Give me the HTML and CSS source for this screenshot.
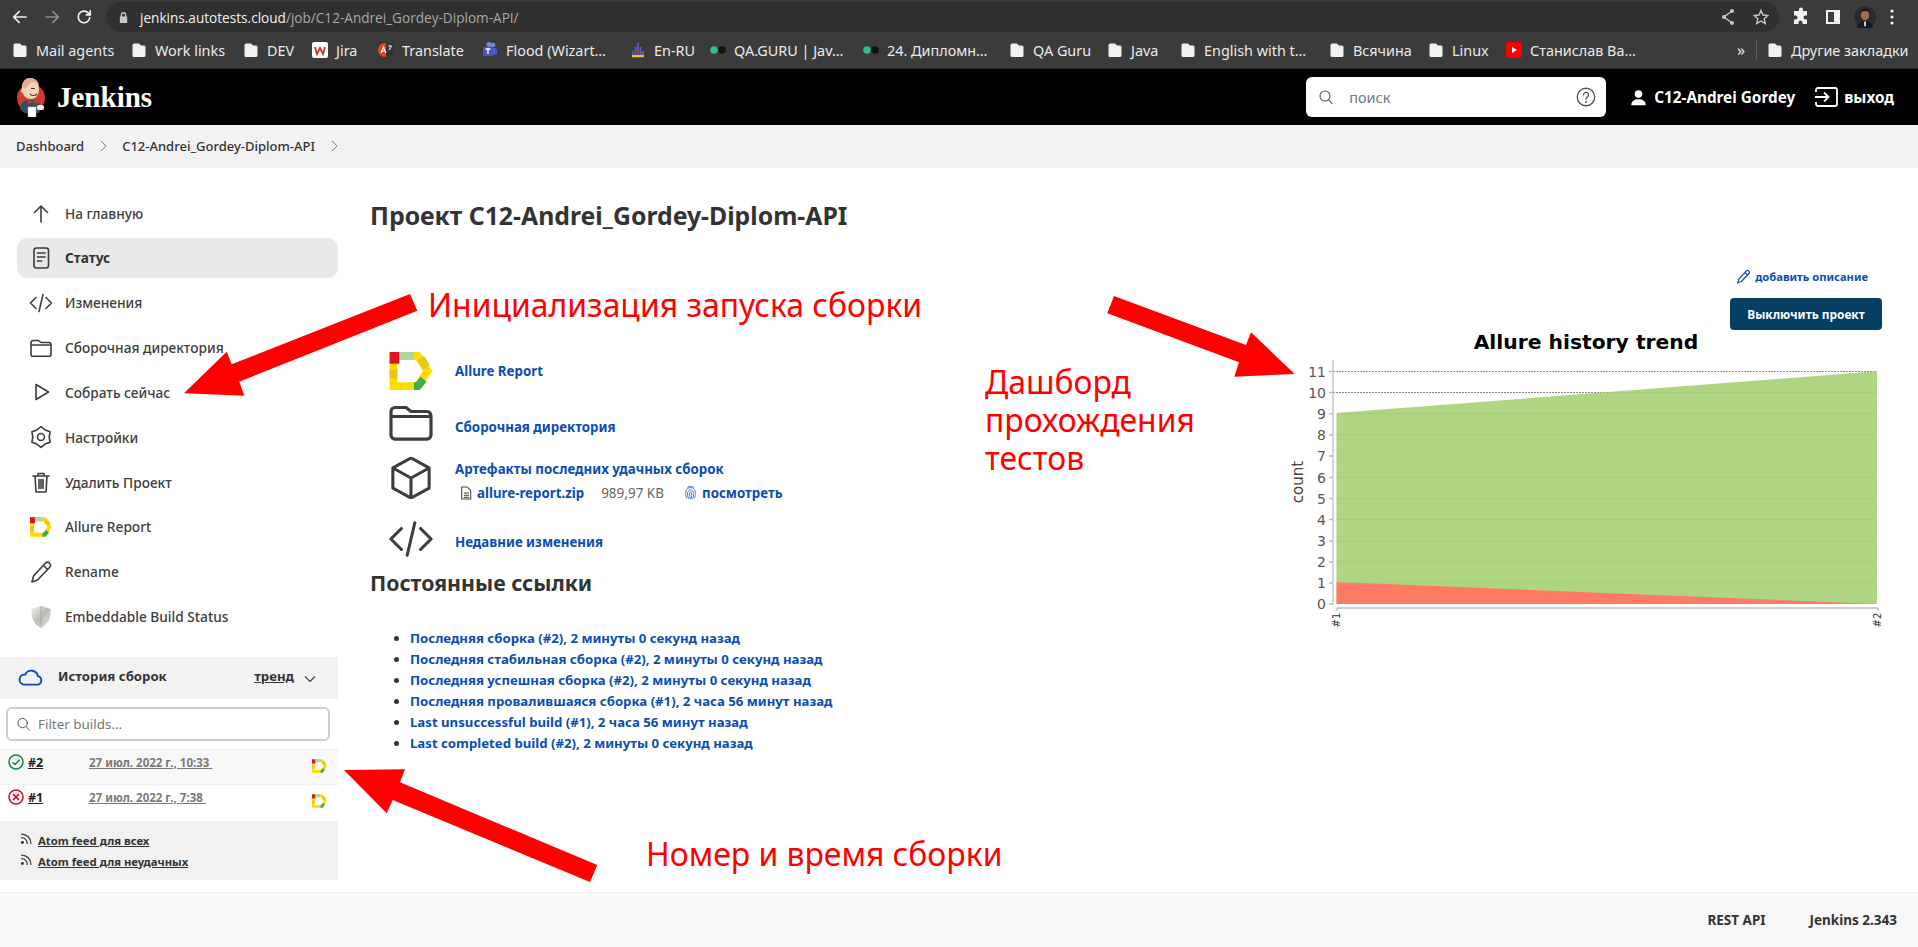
FILE: index.html
```html
<!DOCTYPE html>
<html lang="ru">
<head>
<meta charset="utf-8">
<title>C12-Andrei_Gordey-Diplom-API [Jenkins]</title>
<link rel="stylesheet" href="styles.css">
</head>
<body>
<svg class="defs" width="0" height="0" aria-hidden="true">
  <defs>
    <symbol id="bm-folder" viewBox="0 0 16 16"><path d="M3 1.500h5l2 2h3a1.500 1.500 0 011.500 1.500v8.500A1.500 1.500 0 0113 15H3a1.500 1.500 0 01-1.500-1.500V3A1.500 1.500 0 013 1.500z" fill="#f1f1f1"/></symbol>
    <symbol id="allure" viewBox="0 0 44 39">
      <path d="M4 4H29L39 19.500 29 35H4z" fill="none" stroke="#ffdc00" stroke-width="8"/>
      <rect x="0" y="0" width="10" height="12" fill="#e2131b"/>
      <rect x="10" y="0" width="15" height="8" fill="#a8d5a2"/>
      <path d="M32 6l6 9.500" fill="none" stroke="#e6c81c" stroke-width="8"/>
      <rect x="0" y="18" width="8" height="9" fill="#e6c81c"/>
      <path d="M25 35h4l6-7" fill="none" stroke="#3fae49" stroke-width="8"/>
    </symbol>
    <symbol id="i-folder" viewBox="0 0 24 24"><path class="ln" d="M4 4.500h5.500L12 6.500h8A2.200 2.200 0 0122 8.700v9.600a2 2 0 01-2 2H4a2 2 0 01-2-2V6.500a2 2 0 012-2zM2 9h20"/></symbol>
    <symbol id="i-code" viewBox="0 0 24 24"><path class="ln" d="M7 6.500L1.500 12 7 17.500M17 6.500l5.500 5.500-5.500 5.500M14 3.500l-4 17"/></symbol>
    <symbol id="i-cube" viewBox="0 0 24 24"><path class="ln" d="M12 1.500l9.500 5.200v10.600L12 22.500l-9.500-5.200V6.700zM2.800 6.900L12 12l9.200-5.100M12 12v10.300"/></symbol>
    <symbol id="i-rss" viewBox="0 0 16 16"><circle cx="3" cy="13" r="1.800" fill="#333"/><path class="ln" d="M2 7a7 7 0 017 7M2 2.500A11.500 11.500 0 0113.500 14"/></symbol>
    <linearGradient id="shield-g" x1="0" x2="1" y1="0" y2="1"><stop offset="0" stop-color="#f4f4f0"/><stop offset=".5" stop-color="#b9bcb4"/><stop offset="1" stop-color="#e5e5e0"/></linearGradient>
  </defs>
</svg>

<div class="toolbar">
  <div class="nav">
    <svg class="nav-ico" viewBox="0 0 24 24"><path class="tb" d="M20 12H5M11.500 5L4.500 12l7 7"/></svg>
    <svg class="nav-ico dim" viewBox="0 0 24 24"><path class="tb" d="M4 12h15M12.500 5l7 7-7 7"/></svg>
    <svg class="nav-ico" viewBox="0 0 24 24"><path class="tb" d="M19 12a7 7 0 11-2-5l2 2M19.500 4v5.500H14"/></svg>
  </div>
  <div class="omnibox">
    <div class="url">
      <svg class="lock" viewBox="0 0 12 14"><path d="M3 6V4a3 3 0 016 0v2h1v7H2V6zm1.500 0h3V4a1.500 1.500 0 00-3 0z" fill="#c4c7c5"/></svg>
      <span class="host">jenkins.autotests.cloud</span><span class="path">/job/C12-Andrei_Gordey-Diplom-API/</span>
    </div>
    <div class="omni-actions">
      <svg class="omni-ico" viewBox="0 0 20 20"><path class="tb thin" d="M14 4L6 10l8 6"/><circle cx="14" cy="4" r="2" fill="#c4c7c5"/><circle cx="6" cy="10" r="2" fill="#c4c7c5"/><circle cx="14" cy="16" r="2" fill="#c4c7c5"/></svg>
      <svg class="omni-ico" viewBox="0 0 20 20"><path class="tb thin" d="M10 3.500l2 4.500 4.800.5-3.600 3.200 1 4.800L10 14l-4.200 2.500 1-4.800-3.600-3.200L8 8z"/></svg>
    </div>
  </div>
  <div class="tb-right">
    <svg class="ext" viewBox="0 0 20 20"><path d="M8 2.500a2 2 0 014 0V4h4v4.500h-1.500a2 2 0 000 4H16V17h-4.500v-1.500a2 2 0 00-4 0V17H3v-4.500h1.500a2 2 0 000-4H3V4h5z" fill="#f1f1f1"/></svg>
    <svg class="ext" viewBox="0 0 20 20"><path d="M3 3h14v14H3zM5 5v10h6V5z" fill="#f1f1f1"/></svg>
    <svg class="avatar" viewBox="0 0 24 24"><circle cx="12" cy="12" r="12" fill="#2b2a2c"/><ellipse cx="12" cy="10" rx="4.500" ry="5.500" fill="#a56b50"/><path d="M7 7c1-5 9-5 10 0-3-2-7-2-10 0z" fill="#17120f"/><path d="M3 24c1-6 5-7 9-7s8 1 9 7z" fill="#111a2a"/><path d="M11 17h2v5h-2z" fill="#ddd"/></svg>
    <svg class="dots" viewBox="0 0 4 16"><circle cx="2" cy="2" r="1.600" fill="#f1f1f1"/><circle cx="2" cy="8" r="1.600" fill="#f1f1f1"/><circle cx="2" cy="14" r="1.600" fill="#f1f1f1"/></svg>
  </div>
</div>

<div class="bookmarks">
  <a class="bm"><svg class="bm-ico"><use href="#bm-folder"/></svg><span>Mail agents</span></a>
  <a class="bm"><svg class="bm-ico"><use href="#bm-folder"/></svg><span>Work links</span></a>
  <a class="bm"><svg class="bm-ico"><use href="#bm-folder"/></svg><span>DEV</span></a>
  <a class="bm"><svg class="bm-ico" viewBox="0 0 16 16"><rect width="16" height="16" rx="2" fill="#fff"/><path d="M3 5l2 7 3-6 3 6 2-7" fill="none" stroke="#d32f2f" stroke-width="1.800"/></svg><span>Jira</span></a>
  <a class="bm"><svg class="bm-ico" viewBox="0 0 16 16"><circle cx="7" cy="8" r="7" fill="#e8401c"/><path d="M8 1h7v12l-7 2z" fill="#333"/><path d="M3 11l2.500-6L8 11M4 9h3" fill="none" stroke="#fff" stroke-width="1.200"/><path d="M10 4h4M12 3v5M10.500 8c1.500-1 2.500-2 3-4" fill="none" stroke="#ddd" stroke-width=".9"/></svg><span>Translate</span></a>
  <a class="bm"><svg class="bm-ico" viewBox="0 0 16 16"><circle cx="11" cy="3" r="2.300" fill="#7b83eb"/><circle cx="7" cy="2.500" r="2.500" fill="#7b83eb"/><rect x="8" y="6" width="7" height="7" rx="2" fill="#5059c9"/><rect x="1" y="5" width="10" height="9" rx="1" fill="#4b53bc"/><path d="M3.500 7h5M6 7v5" stroke="#fff" stroke-width="1.300"/></svg><span>Flood (Wizart…</span></a>
  <a class="bm"><svg class="bm-ico" viewBox="0 0 16 16"><path d="M3 16V9M5.500 16V5M8 16V1M10.500 16V5M13 16V9" stroke="#4466cc" stroke-width="1.800"/><path d="M2 14h12" stroke="#e8c531" stroke-width="2"/><path d="M5.500 9v3M8 7v5M10.500 9v3" stroke="#c33" stroke-width="1.800"/></svg><span>En-RU</span></a>
  <a class="bm"><svg class="bm-ico" viewBox="0 0 16 16"><circle cx="4" cy="8" r="3.800" fill="#2fbf8f"/><circle cx="12" cy="8" r="3.800" fill="#111"/></svg><span>QA.GURU | Jav…</span></a>
  <a class="bm"><svg class="bm-ico" viewBox="0 0 16 16"><circle cx="4" cy="8" r="3.800" fill="#2fbf8f"/><circle cx="12" cy="8" r="3.800" fill="#111"/></svg><span>24. Дипломн…</span></a>
  <a class="bm"><svg class="bm-ico"><use href="#bm-folder"/></svg><span>QA Guru</span></a>
  <a class="bm"><svg class="bm-ico"><use href="#bm-folder"/></svg><span>Java</span></a>
  <a class="bm"><svg class="bm-ico"><use href="#bm-folder"/></svg><span>English with t…</span></a>
  <a class="bm"><svg class="bm-ico"><use href="#bm-folder"/></svg><span>Всячина</span></a>
  <a class="bm"><svg class="bm-ico"><use href="#bm-folder"/></svg><span>Linux</span></a>
  <a class="bm"><svg class="bm-ico" viewBox="0 0 16 16"><rect width="16" height="16" rx="3" fill="#f00"/><path d="M6 5l5 3-5 3z" fill="#fff"/></svg><span>Станислав Ва…</span></a>
  <span class="bm-more">»</span>
  <span class="bm-sep"></span>
  <a class="bm"><svg class="bm-ico"><use href="#bm-folder"/></svg><span>Другие закладки</span></a>
</div>

<header class="jk-header">
  <svg class="jk-logo" viewBox="0 0 28 39">
    <circle cx="14" cy="20" r="14" fill="#d33833"/>
    <path d="M3 31c0-6 4-9 10-9s11 2 11 8l-2 5H7z" fill="#335061"/>
    <path d="M5 12C4 4 9 0 13 0s9 3 9 11c0 6-3 10-8 10S6 18 5 12z" fill="#f0d6b7"/>
    <path d="M5.500 9C5 3 9 0 13 0s8 2 9 7c-3-3-6-4-9-2-1 2-2 3-3 3l-1 3z" fill="#e7ac93"/>
    <circle cx="6" cy="13" r="2" fill="#f0d6b7"/>
    <path d="M14 10.500h4M13 16c2 2 5 2 7 0" fill="none" stroke="#49362a" stroke-width="1.100"/>
    <path d="M11 22l5 2 5-2v4l-5-1.500L11 26z" fill="#d33833"/>
    <path d="M11 29h8v10h-8z" fill="#fff" stroke="#bbb" stroke-width=".5"/>
    <rect x="20" y="27" width="7" height="5" rx="2" fill="#f0f0f0"/>
  </svg>
  <span class="jk-name">Jenkins</span>
  <div class="jk-search">
    <svg class="jk-search-ico" viewBox="0 0 24 24"><circle cx="10.500" cy="10.500" r="7.500" class="ln gray"/><path class="ln gray" d="M16 16l5 6"/></svg>
    <span class="jk-search-ph">поиск</span>
    <svg class="jk-help" viewBox="0 0 24 24"><circle cx="12" cy="12" r="10.500" class="ln gray"/><path class="ln gray" d="M9 9.500a3 3 0 115 2.200c-1.200 1-2 1.500-2 3"/><circle cx="12" cy="18" r="1.200" fill="#555"/></svg>
  </div>
  <a class="jk-user">
    <svg class="jk-user-ico" viewBox="0 0 20 20"><circle cx="10" cy="6" r="4.500" fill="#fff"/><path d="M1.500 19c0-5 3.500-7 8.500-7s8.500 2 8.500 7z" fill="#fff"/></svg>
    <span>C12-Andrei Gordey</span>
  </a>
  <a class="jk-logout">
    <svg class="jk-logout-ico" viewBox="0 0 24 20"><path d="M2 5V3a2 2 0 012-2h17a2 2 0 012 2v14a2 2 0 01-2 2H4a2 2 0 01-2-2v-2" fill="none" stroke="#fff" stroke-width="1.800"/><path d="M1 10h13M10 5.500l4.500 4.500-4.500 4.500" fill="none" stroke="#fff" stroke-width="1.800"/></svg>
    <span>выход</span>
  </a>
</header>

<nav class="crumbs">
  <a>Dashboard</a>
  <svg class="crumb-sep" viewBox="0 0 8 14"><path d="M1 1l6 6-6 6" fill="none" stroke="#777" stroke-width="1.100"/></svg>
  <a>C12-Andrei_Gordey-Diplom-API</a>
  <svg class="crumb-sep" viewBox="0 0 8 14"><path d="M1 1l6 6-6 6" fill="none" stroke="#777" stroke-width="1.100"/></svg>
</nav>

<div class="layout">
  <aside class="side">
    <ul class="tasks">
      <li class="task"><svg class="task-ico" viewBox="0 0 24 24"><path class="ln" d="M12 5v16M5.500 11.500L12 5l6.500 6.500"/></svg><span>На главную</span></li>
      <li class="task active"><svg class="task-ico" viewBox="0 0 24 24"><rect class="ln" x="5" y="2" width="14.500" height="20" rx="2.500"/><path class="ln" d="M8.500 7h7.500M8.500 11h7.500M8.500 15h4"/></svg><span>Статус</span></li>
      <li class="task"><svg class="task-ico"><use href="#i-code"/></svg><span>Изменения</span></li>
      <li class="task"><svg class="task-ico"><use href="#i-folder"/></svg><span>Сборочная директория</span></li>
      <li class="task"><svg class="task-ico" viewBox="0 0 24 24"><path class="ln" d="M7 4.500L19.500 12 7 19.500z"/></svg><span>Собрать сейчас</span></li>
      <li class="task"><svg class="task-ico" viewBox="0 0 24 24"><path class="ln" d="M12 1.500l4.100 3.400 5 1.850-.9 5.250.9 5.250-5 1.850-4.100 3.400-4.100-3.400-5-1.850.9-5.250-.9-5.250 5-1.850z"/><circle class="ln" cx="12" cy="12" r="3.500"/></svg><span>Настройки</span></li>
      <li class="task"><svg class="task-ico" viewBox="0 0 24 24"><path class="ln" d="M4 6h16M9 6V3.500h6V6M6 6l1 16h10l1-16M10 9.500v9M14 9.500v9M12 9.500v9"/></svg><span>Удалить Проект</span></li>
      <li class="task"><svg class="task-ico allure-ico"><use href="#allure"/></svg><span>Allure Report</span></li>
      <li class="task"><svg class="task-ico" viewBox="0 0 24 24"><path class="ln" d="M3 22l1.500-6L16.500 3a2.500 2.500 0 013.800 0l.5.500a2.500 2.500 0 010 3.700L8.500 20zM14.500 5.500l4 4"/></svg><span>Rename</span></li>
      <li class="task"><svg class="task-ico" viewBox="0 0 24 24"><path d="M12 1l9.500 3c.5 8-1.500 15-9.500 19C4 19 2 12 2.500 4z" fill="url(#shield-g)"/><path d="M12 1v22" stroke="#9ea197" stroke-width=".7"/></svg><span>Embeddable Build Status</span></li>
    </ul>

    <section class="history">
      <div class="hist-head">
        <svg class="cloud" viewBox="0 0 26 20"><path d="M6 17.500h14a4.500 4.500 0 00.800-8.900A7 7 0 007.500 7 5.300 5.300 0 006 17.500z" fill="none" stroke="#0b4db3" stroke-width="2"/></svg>
        <span class="hist-title">История сборок</span>
        <a class="hist-trend">тренд</a>
        <svg class="hist-chev" viewBox="0 0 12 8"><path d="M1 1.500l5 5 5-5" fill="none" stroke="#444" stroke-width="1.200"/></svg>
      </div>
      <div class="filter-wrap">
        <div class="filter">
          <svg class="filter-ico" viewBox="0 0 24 24"><circle cx="10.500" cy="10.500" r="7.500" class="ln gray"/><path class="ln gray" d="M16 16l5.500 6"/></svg>
          <span>Filter builds...</span>
        </div>
      </div>
      <div class="build odd">
        <svg class="b-status" viewBox="0 0 16 16"><circle cx="8" cy="8" r="7" fill="none" stroke="#138347" stroke-width="1.500"/><path d="M4.500 8.200l2.500 2.300 4.500-4.800" fill="none" stroke="#138347" stroke-width="1.500"/></svg>
        <a class="b-num">#2</a>
        <a class="b-date">27 июл. 2022 г., 10:33&nbsp;</a>
        <svg class="b-allure"><use href="#allure"/></svg>
      </div>
      <div class="build">
        <svg class="b-status" viewBox="0 0 16 16"><circle cx="8" cy="8" r="7" fill="none" stroke="#e4002b" stroke-width="1.500"/><path d="M5 5l6 6M11 5l-6 6" fill="none" stroke="#e4002b" stroke-width="1.700"/></svg>
        <a class="b-num">#1</a>
        <a class="b-date">27 июл. 2022 г., 7:38&nbsp;</a>
        <svg class="b-allure"><use href="#allure"/></svg>
      </div>
      <div class="feeds">
        <div class="feed"><svg class="feed-ico"><use href="#i-rss"/></svg><a>Atom feed для всех</a></div>
        <div class="feed"><svg class="feed-ico"><use href="#i-rss"/></svg><a>Atom feed для неудачных</a></div>
      </div>
    </section>
  </aside>

  <main class="main">
    <h1 class="title">Проект C12-Andrei_Gordey-Diplom-API</h1>
    <div class="content">
      <div class="left">
        <div class="plink p1"><svg class="plink-ico"><use href="#allure"/></svg><a class="lnk">Allure Report</a></div>
        <div class="plink p2"><svg class="plink-ico" viewBox="1 3.500 22 17.500"><use href="#i-folder" width="24" height="24"/></svg><a class="lnk">Сборочная директория</a></div>
        <div class="plink p3">
          <svg class="plink-ico tall" viewBox="1 1 22 22"><use href="#i-cube" width="24" height="24"/></svg>
          <div class="arts">
            <a class="lnk">Артефакты последних удачных сборок</a>
            <div class="art-row">
              <svg class="art-file" viewBox="0 0 14 16"><path class="ln thin" d="M2 1h6.500L12.500 5v10H2zM5 8h5M5 10.500h5M5 13h5"/></svg>
              <a class="lnk art-name">allure-report.zip</a>
              <span class="art-size">989,97 KB</span>
              <svg class="art-fp" viewBox="0 0 14 16"><g fill="none" stroke="#2a62c4" stroke-width=".9"><path d="M3 14C1.500 11 1.500 7 2.500 5A5.500 5.500 0 0111.500 5c1 2 1 6 0 9"/><path d="M5 15C3.500 11 3.500 8 4.500 6.500A3 3 0 019.500 6.500C10.500 8 10.500 11 9.500 15"/><path d="M7 15C6 11 5.800 9.500 6 8.500a1 1 0 012 0C8.300 10 8.200 12 7.800 15"/><path d="M3.500 2.500a6 6 0 017 0"/></g></svg>
              <a class="lnk">посмотреть</a>
            </div>
          </div>
        </div>
        <div class="plink p4"><svg class="plink-ico" viewBox="0.500 3 23 18"><use href="#i-code" width="24" height="24"/></svg><a class="lnk">Недавние изменения</a></div>
        <h2 class="sub">Постоянные ссылки</h2>
        <ul class="perma">
          <li><a class="lnk">Последняя сборка (#2), 2 минуты 0 секунд назад</a></li>
          <li><a class="lnk">Последняя стабильная сборка (#2), 2 минуты 0 секунд назад</a></li>
          <li><a class="lnk">Последняя успешная сборка (#2), 2 минуты 0 секунд назад</a></li>
          <li><a class="lnk">Последняя провалившаяся сборка (#1), 2 часа 56 минут назад</a></li>
          <li><a class="lnk">Last unsuccessful build (#1), 2 часа 56 минут назад</a></li>
          <li><a class="lnk">Last completed build (#2), 2 минуты 0 секунд назад</a></li>
        </ul>
      </div>
      <div class="right">
        <a class="add-desc">
          <svg class="add-ico" viewBox="0 0 24 24"><path d="M3 22l1.500-6L16.500 3a2.500 2.500 0 013.800 0l.5.500a2.500 2.500 0 010 3.700L8.500 20zM14.500 5.500l4 4" fill="none" stroke="#0b4db3" stroke-width="2"/></svg>
          <span>добавить описание</span>
        </a>
        <button class="disable-btn">Выключить проект</button>
        <svg class="chart" viewBox="1278 330 604 310">
          <text class="c-title" x="1586" y="349">Allure history trend</text>
          <g class="grid-dark">
            <path d="M1330 371.500H1877M1330 392.500H1877"/>
          </g>
          <polygon points="1336.500,413 1877,371.300 1877,604 1336.500,604" fill="#aed581"/>
          <polygon points="1336.500,582 1877,604 1336.500,604" fill="#ff7a66"/>
          <g class="grid-soft">
            <path d="M1337 413.800H1877M1337 435H1877M1337 456H1877M1337 477.500H1877M1337 498.500H1877M1337 519.500H1877M1337 541H1877M1337 562H1877M1337 583H1877M1607 392.500H1877"/>
          </g>
          <g class="axis">
            <path d="M1333 360V605M1337 608H1878M1329 371.500h4M1329 392.500h4M1329 413.800h4M1329 435h4M1329 456h4M1329 477.500h4M1329 498.500h4M1329 519.500h4M1329 541h4M1329 562h4M1329 583h4M1329 604h4M1337 608v3M1878 608v3"/>
          </g>
          <g class="c-ticks">
            <text x="1326" y="376.500">11</text><text x="1326" y="397.500">10</text><text x="1326" y="418.800">9</text><text x="1326" y="440">8</text><text x="1326" y="461">7</text><text x="1326" y="482.500">6</text><text x="1326" y="503.500">5</text><text x="1326" y="524.500">4</text><text x="1326" y="546">3</text><text x="1326" y="567">2</text><text x="1326" y="588">1</text><text x="1326" y="609">0</text>
          </g>
          <text class="c-count" transform="translate(1303 482) rotate(-90)">count</text>
          <text class="c-x" transform="translate(1340 620) rotate(-90)">#1</text>
          <text class="c-x" transform="translate(1881 620) rotate(-90)">#2</text>
        </svg>
      </div>
    </div>
  </main>
</div>

<footer class="foot">
  <a>REST API</a>
  <a>Jenkins 2.343</a>
</footer>

<svg class="arrows" viewBox="0 0 1918 947" aria-hidden="true">
  <polygon points="410,294 417.300,310.700 239.300,381.700 244.300,395.700 184,393.300 226.700,351.700 231.700,364.300" fill="#f00"/>
  <polygon points="1114,296 1107.300,313.300 1239,362.300 1234.300,376.700 1294.700,374 1251,332.300 1246,345" fill="#f00"/>
  <polygon points="344,770 405,769.300 400,782.300 597.300,865 590,882 392.700,800 386.700,813.300" fill="#f00"/>
</svg>
<div class="note note-a">Инициализация запуска сборки</div>
<div class="note note-b">Дашборд<br>прохождения<br>тестов</div>
<div class="note note-c">Номер и время сборки</div>
</body>
</html>
```

FILE: styles.css
```css
* { box-sizing: border-box; }
html, body { margin: 0; padding: 0; }
body {
  position: relative;
  width: 1918px;
  height: 947px;
  overflow: hidden;
  display: flex;
  flex-direction: column;
  background: #fff;
  color: #333;
  font-family: "Noto Sans", "Open Sans", sans-serif;
  font-size: 14px;
}
ul { list-style: none; margin: 0; padding: 0; }
.defs { position: absolute; }
.ln { fill: none; stroke: #3d3d3d; stroke-width: 1.6; stroke-linecap: round; stroke-linejoin: round; }
.ln.thin { stroke-width: 1.2; }
.ln.gray { stroke: #555; }
.tb { fill: none; stroke: #f1f1f1; stroke-width: 2; }
.tb.thin { stroke: #c4c7c5; stroke-width: 1.4; }

/* browser chrome */
.toolbar {
  height: 34px;
  flex: none;
  background: #3b3b3b;
  display: flex;
  align-items: center;
  padding-left: 4px;
}
.nav { display: flex; width: 96px; }
.nav-ico { width: 32px; height: 20px; }
.nav-ico.dim .tb { stroke: #8e8e8e; }
.omnibox {
  margin-left: 6px;
  width: 1673px;
  height: 30px;
  background: #303030;
  border-radius: 15px;
  display: flex;
  align-items: center;
  justify-content: space-between;
  padding: 0 8px 0 12px;
}
.url { display: flex; align-items: center; font-size: 13.6px; font-family: "Open Sans", sans-serif; }
.lock { width: 11px; height: 13px; margin-right: 11px; }
.host { color: #f1f1f1; }
.path { color: #a8a8a8; }
.omni-actions { display: flex; gap: 13px; }
.omni-ico { width: 20px; height: 20px; }
.tb-right { display: flex; align-items: center; margin-left: 12px; }
.ext { width: 20px; height: 20px; margin-right: 12px; }
.avatar { width: 22px; height: 24px; margin-right: 14px; margin-left: -1px; }
.dots { width: 4px; height: 16px; }

.bookmarks {
  height: 35px;
  flex: none;
  background: #3b3b3b;
  border-bottom: 1px solid #2a2a2a;
  display: grid;
  grid-template-columns: 119px 112px 69px 66px 104px 148px 80px 153px 146px 98px 73px 149px 99px 78px 230px 20px 11px 140px;
  align-items: center;
  padding: 0 0 2px 12px;
  color: #eaeaea;
  font-size: 14.4px;
  white-space: nowrap;
}
.bm { display: flex; align-items: center; gap: 8px; }
.bm-ico { width: 16px; height: 16px; flex: none; }
.bm-more { font-size: 16px; padding-left: 1px; }
.bm-sep { width: 1px; height: 20px; background: #5c5c5c; }

/* jenkins header */
.jk-header {
  height: 56px;
  flex: none;
  background: #000;
  color: #fff;
  display: flex;
  align-items: center;
  padding: 0 24px 0 17px;
}
.jk-logo { width: 28px; height: 39px; }
.jk-name {
  margin-left: 12px;
  font-family: "Liberation Serif", serif;
  font-weight: 700;
  font-size: 29px;
  margin-right: auto;
}
.jk-search {
  width: 300px;
  height: 40px;
  flex: none;
  background: #fff;
  border-radius: 6px;
  display: flex;
  align-items: center;
  padding: 0 10px 0 12px;
  color: #777;
}
.jk-search-ico { width: 16px; height: 18px; }
.jk-search-ph { margin-left: 15px; margin-right: auto; font-size: 14.5px; }
.jk-help { width: 20px; height: 20px; }
.jk-user {
  margin-left: 24px;
  display: flex;
  align-items: center;
  gap: 7px;
  font-weight: 700;
  font-size: 15.3px;
}
.jk-user-ico { width: 17px; height: 17px; }
.jk-logout {
  margin-left: 19px;
  display: flex;
  align-items: center;
  gap: 6px;
  font-weight: 700;
  font-size: 15.3px;
}
.jk-logout-ico { width: 24px; height: 20px; }

.crumbs {
  height: 43px;
  flex: none;
  background: #f2f2f2;
  display: flex;
  align-items: center;
  padding: 0 0 2px 16px;
  font-size: 13px;
  font-weight: 500;
  color: #333;
}
.crumb-sep { width: 7px; height: 12px; margin: 0 15.5px; }

/* page */
.layout { flex: 1; display: flex; min-height: 0; }
.side { width: 338px; flex: none; padding-top: 25px; }
.tasks { display: flex; flex-direction: column; gap: 4.85px; margin-left: 17px; }
.task {
  height: 40px;
  border-radius: 10px;
  display: flex;
  align-items: center;
  gap: 12px;
  padding-left: 12px;
  font-size: 13.7px;
  font-weight: 500;
  color: #3d3d3d;
}
.task.active { background: #e9e9e9; font-weight: 700; color: #333; }
.task-ico { width: 24px; height: 24px; flex: none; }
.allure-ico { width: 22px; height: 20px; margin: 0 1px; }

.history { margin-top: 20px; }
.hist-head {
  height: 42px;
  background: #f2f2f2;
  display: flex;
  align-items: center;
  padding-left: 18px;
  font-weight: 700;
  font-size: 13.2px;
}
.cloud { width: 25px; height: 19px; }
.hist-title { margin: -3px auto 0 15px; }
.hist-trend { text-decoration: underline; margin-top: -3px; }
.hist-chev { width: 12px; height: 8px; margin: 2px 22px 0 10px; }
.filter-wrap { padding: 8px 8px 8px 6px; height: 50px; }
.filter {
  height: 34px;
  border: 2px solid #c2d0d4;
  border-radius: 6px;
  display: flex;
  align-items: center;
  padding-left: 8px;
  color: #777;
  font-size: 13.4px;
  gap: 7px;
}
.filter-ico { width: 15px; height: 16px; }
.build {
  position: relative;
  height: 36px;
  display: flex;
  padding: 4px 0 0 8px;
  font-size: 12.5px;
  font-weight: 700;
}
.build.odd { background: #f8f8f8; border-top: 1px solid #eee; border-bottom: 1px solid #eee; }
.b-status { width: 16px; height: 16px; flex: none; }
.b-num { margin-left: 4px; width: 61px; text-decoration: underline; color: #222; font-size: 12.5px; }
.b-date { color: #7a7a7a; text-decoration: underline; width: 223px; font-size: 11.5px; line-height: 17px; }
.b-allure { width: 15px; height: 14px; flex: none; margin-top: 5px; }
.feeds { height: 59px; background: #f1f1f1; padding: 9px 0 0 20px; }
.feed { display: flex; align-items: center; height: 21px; gap: 5px; font-size: 11.3px; font-weight: 700; }
.feed a { text-decoration: underline; }
.feed-ico { width: 13px; height: 13px; margin-top: -4px; }

.main { flex: 1; padding: 25px 36px 0 32px; min-width: 0; }
.title { margin: 0 0 27px; height: 44px; line-height: 44px; font-size: 24.8px; font-weight: 700; color: #333; }
.content { display: flex; justify-content: space-between; }
.left { width: 700px; padding-top: 88px; }
.lnk { color: #0b4db3; font-weight: 700; font-size: 13.3px; }
.plink { display: flex; align-items: center; gap: 22px; padding-left: 19px; }
.plink-ico { width: 44px; height: 38px; flex: none; }
.plink-ico.tall { height: 42px; }
.p2 { margin-top: 14px; }
.p2 .lnk { margin-top: 7px; }
.p3 { margin-top: 15px; height: 42px; }
.p4 { margin-top: 21px; }
.p4 .lnk { margin-top: 6px; }
.arts { display: flex; flex-direction: column; gap: 5.5px; margin-top: 5.5px; }
.art-row { display: flex; align-items: center; margin-left: 5px; }
.art-file { width: 12px; height: 14px; margin-right: 5px; }
.art-size { margin: 0 20px 0 17px; color: #666; font-size: 13.5px; }
.art-fp { width: 13px; height: 15px; margin-right: 5px; }
.sub { margin: 9px 0 0; height: 32px; line-height: 32px; font-size: 21.3px; font-weight: 700; color: #333; }
.perma { margin-top: 29px; padding-left: 40px; list-style: disc; line-height: 21px; }
.perma li { color: #333; font-size: 13.2px; }
.perma .lnk { font-size: 13.2px; }
.right { width: 604px; display: flex; flex-direction: column; align-items: flex-end; }
.add-desc { height: 24px; display: flex; align-items: center; gap: 4px; color: #0b4db3; font-size: 11.2px; font-weight: 700; margin-right: 14px; }
.add-ico { width: 15px; height: 15px; }
.disable-btn {
  margin-top: 10px;
  width: 152px;
  height: 32px;
  background: #063f63;
  color: #fff;
  border: 0;
  border-radius: 4px;
  font: 700 11.9px "Noto Sans", sans-serif;
}
.chart { width: 604px; height: 310px; display: block; }
.c-title { font: 700 20.3px "DejaVu Sans", sans-serif; text-anchor: middle; fill: #000; }
.c-ticks text { font: 14px "DejaVu Sans", sans-serif; fill: #555; text-anchor: end; }
.c-count { font: 15px "DejaVu Sans", sans-serif; fill: #444; text-anchor: middle; }
.c-x { font: 10px "DejaVu Sans", sans-serif; fill: #333; text-anchor: middle; }
.grid-dark path { stroke: #888; stroke-width: 1; stroke-dasharray: 2 1; fill: none; }
.grid-soft path { stroke: #9fc476; stroke-width: 1; stroke-dasharray: 2 2; fill: none; }
.axis path { stroke: #bdbdbd; stroke-width: 1.3; fill: none; }

.foot {
  height: 55px;
  flex: none;
  background: #f8f8f8;
  border-top: 1px solid #eee;
  display: flex;
  justify-content: flex-end;
  align-items: center;
  gap: 44px;
  padding-right: 21px;
  font-weight: 700;
  font-size: 13.5px;
  color: #333;
}

/* annotations lying over the page */
.arrows { position: absolute; left: 0; top: 0; width: 1918px; height: 947px; pointer-events: none; }
.note { position: absolute; color: #f00; font-size: 31.9px; line-height: 38px; white-space: nowrap; }
.note-a { left: 428px; top: 286px; }
.note-b { left: 985px; top: 363px; }
.note-c { left: 646px; top: 835px; }
```
